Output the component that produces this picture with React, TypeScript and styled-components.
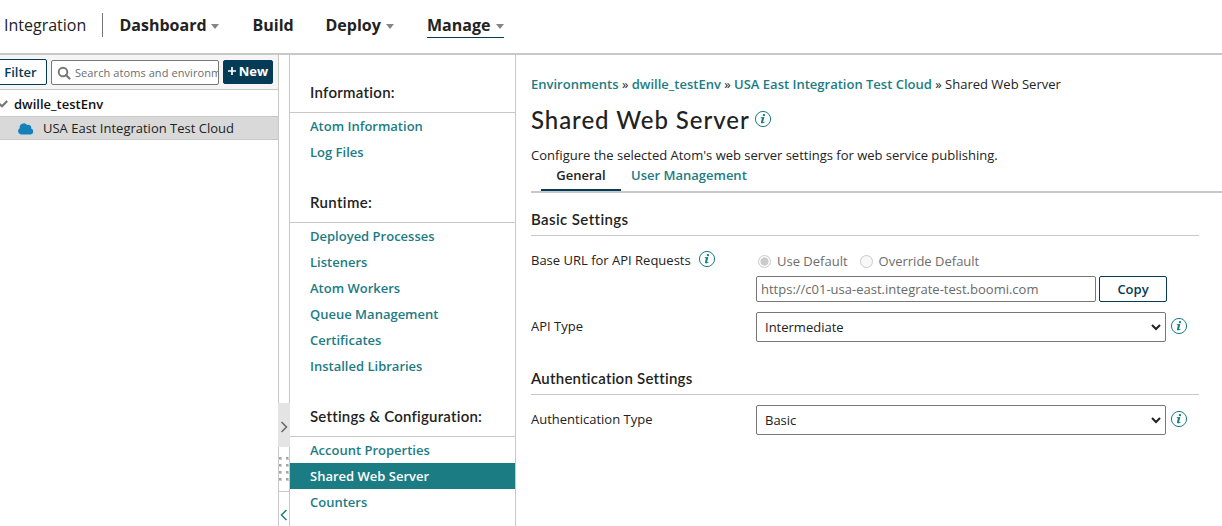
import React from "react";
import styled, { createGlobalStyle, css } from "styled-components";

const teal = "#1c7c84";
const navy = "#063b56";
const line = "#c8c8c8";

const GlobalStyle = createGlobalStyle`
  * { box-sizing: border-box; }
  html, body { margin: 0; overflow: hidden; background: #fff; }
  body, button, input {
    font-family: "Open Sans", "Noto Sans", sans-serif;
    font-size: 13px;
    color: #222;
  }
`;

const Page = styled.div`
  width: 1222px;
  height: 526px;
  display: flex;
  flex-direction: column;
  overflow: hidden;
  white-space: nowrap;
`;
const Header = styled.header`
  height: 55px;
  flex: none;
  display: flex;
  align-items: flex-start;
  padding: 13px 0 0 4px;
  border-bottom: 2px solid ${line};
`;
const Product = styled.span`
  width: 99px;
  height: 24px;
  border-right: 1px solid #777;
  font-size: 16px;
  line-height: 24px;
`;
const MenuItem = styled.a<{ $gap: number; $width: number; $active?: boolean }>`
  display: flex;
  align-items: center;
  justify-content: space-between;
  margin-left: ${(p) => p.$gap}px;
  width: ${(p) => p.$width}px;
  height: 25px;
  font-size: 16px;
  font-weight: 700;
  line-height: 24px;
  border-bottom: 1px solid ${(p) => (p.$active ? navy : "transparent")};
`;
const Caret = styled.i`
  border: 4px solid transparent;
  border-top: 5px solid #858585;
  border-bottom: 0;
  margin-top: 2px;
`;
const Body = styled.div`
  flex: 1;
  min-height: 0;
  display: flex;
`;

const Sidebar = styled.aside`
  width: 279px;
  flex: none;
  border-right: 1px solid ${line};
`;
const Toolbar = styled.div`
  height: 35px;
  display: flex;
  align-items: flex-start;
  padding-top: 4px;
  background: #f5f5f5;
  border-bottom: 1px solid ${line};
`;
const buttonBase = css`
  padding: 0;
  border: 1px solid ${navy};
  border-radius: 2px;
  font-weight: 600;
  color: ${navy};
  background: #fff;
`;
const FilterButton = styled.button`
  ${buttonBase}
  width: 52px;
  height: 26px;
  margin-left: -5px;
  padding-right: 1px;
  line-height: 24px;
`;
const SearchField = styled.label`
  display: flex;
  align-items: center;
  width: 168px;
  height: 25px;
  margin: 1px 4px 0;
  padding-left: 5px;
  border: 1px solid #777;
  border-radius: 2px;
  background: #fff;
  overflow: hidden;
`;
const SearchText = styled.span`
  flex: 1;
  min-width: 0;
  overflow: hidden;
  margin-left: 4px;
  font-size: 11px;
  letter-spacing: 0.08px;
  color: #6d6d6d;
`;
const NewButton = styled.button`
  ${buttonBase}
  display: flex;
  align-items: center;
  justify-content: center;
  gap: 3px;
  width: 50px;
  height: 24px;
  margin-top: 1px;
  color: #fff;
  font-weight: 700;
  line-height: 20px;
  padding-bottom: 2px;
  background: ${navy};
`;
const TreeRow = styled.div<{ $child?: boolean }>`
  display: flex;
  align-items: center;
  height: ${(p) => (p.$child ? 24 : 26)}px;
  padding-top: ${(p) => (p.$child ? 0 : 2)}px;
  ${(p) =>
    p.$child
      ? css`
          padding-left: 17px;
          background: #d9d9d9;
          border: solid ${line};
          border-width: 1px 0;
        `
      : css`
          font-weight: 600;
          color: #111;
        `}
  svg { flex: none; }
`;
const TreeLabel = styled.span<{ $gap: number }>`
  margin-left: ${(p) => p.$gap}px;
`;

const Splitter = styled.div`
  width: 11px;
  flex: none;
  display: flex;
  flex-direction: column;
  align-items: center;
  padding-top: 348px;
  border-right: 1px solid ${line};
`;
const Handle = styled.div`
  width: 12px;
  height: 44px;
  flex: none;
  display: flex;
  align-items: center;
  justify-content: center;
  padding-top: 3px;
  background: #e4e4e4;
`;
const Grip = styled.div`
  display: grid;
  grid-template-columns: 3px 3px;
  grid-auto-rows: 3px;
  gap: 4px;
  height: 45px;
  width: 11px;
  padding-top: 10px;
  border-bottom: 1px solid ${line};
`;
const Dot = styled.i`
  background: #a4a4a4;
  border: solid #d0d0d0;
  border-width: 0 1px 1px 0;
`;
const Collapse = styled.div`
  padding-top: 17px;
  line-height: 0;
`;

const Nav = styled.nav`
  width: 226px;
  flex: none;
  border-right: 1px solid ${line};
`;
const headingFont = css`
  font-family: Lato, sans-serif;
  font-weight: 600;
  color: #222;
`;
const NavHeading = styled.h3<{ $spacing: number }>`
  ${headingFont}
  height: 58px;
  margin: 0;
  padding: 27px 0 0 20px;
  font-size: 15px;
  line-height: 20px;
  letter-spacing: ${(p) => p.$spacing}px;
  border-bottom: 1px solid ${line};
`;
const NavLink = styled.a<{ $active?: boolean }>`
  display: block;
  height: 26px;
  padding-left: 20px;
  line-height: 26px;
  font-weight: 600;
  color: ${(p) => (p.$active ? "#fff" : teal)};
  background: ${(p) => (p.$active ? teal : "transparent")};
`;

const Main = styled.main`
  flex: 1;
  padding: 20px 0 0 15px;
`;
const Crumbs = styled.div`
  line-height: 18px;
`;
const Crumb = styled.a`
  font-weight: 600;
  color: ${teal};
`;
const Title = styled.h1`
  ${headingFont}
  display: flex;
  align-items: center;
  gap: 4px;
  height: 30px;
  margin: 11px 0 0;
  font-size: 24px;
  font-weight: 500;
`;
const TitleText = styled.span`
  letter-spacing: 0.95px;
`;
const Description = styled.p`
  margin: 12px 0 0;
  line-height: 18px;
`;
const Tabs = styled.div`
  display: flex;
  height: 29px;
  padding-left: 10px;
  border-bottom: 2px solid ${line};
`;
const Tab = styled.a<{ $active?: boolean }>`
  width: ${(p) => (p.$active ? 80 : 140)}px;
  height: 27px;
  padding-left: ${(p) => (p.$active ? 0 : 10)}px;
  text-align: ${(p) => (p.$active ? "center" : "left")};
  line-height: 22px;
  font-weight: 600;
  color: ${(p) => (p.$active ? "#222" : teal)};
  border-bottom: 2px solid ${(p) => (p.$active ? navy : "transparent")};
`;
const Section = styled.h2<{ $gap: number; $spacing: number }>`
  ${headingFont}
  width: 668px;
  height: 27px;
  margin: ${(p) => p.$gap}px 0 0;
  font-size: 15px;
  line-height: 20px;
  letter-spacing: ${(p) => p.$spacing}px;
  border-bottom: 1px solid ${line};
`;
const Row = styled.div<{ $top: number }>`
  display: flex;
  align-items: flex-start;
  padding-top: ${(p) => p.$top}px;
`;
const Label = styled.div<{ $top: number }>`
  display: flex;
  align-items: center;
  gap: 7px;
  width: 225px;
  height: 18px;
  margin-top: ${(p) => p.$top}px;
  svg { margin-bottom: 3px; }
`;
const Choices = styled.div`
  display: flex;
  align-items: center;
  height: 18px;
  margin-top: 1px;
  color: #6d6d6d;
`;
const Radio = styled.i<{ $on?: boolean }>`
  width: 13px;
  height: 13px;
  margin: 0 6px 0 ${(p) => (p.$on ? 2 : 12)}px;
  border: 1px solid #cbcbcb;
  border-radius: 50%;
  background: ${(p) => (p.$on ? "radial-gradient(circle, #cbcbcb 3.6px, #fafafa 4.4px)" : "#f8f8f8")};
`;
const UrlLine = styled.div`
  display: flex;
  gap: 3px;
  margin-top: 6px;
`;
const UrlField = styled.div`
  width: 340px;
  height: 26px;
  padding-left: 4px;
  line-height: 25px;
  border: 1px solid #777;
  border-radius: 2px;
  color: #6a6a6a;
`;
const CopyButton = styled.button`
  ${buttonBase}
  width: 68px;
  height: 26px;
`;
const SelectBox = styled.div`
  display: flex;
  align-items: center;
  justify-content: space-between;
  width: 410px;
  height: 30px;
  margin-right: 4px;
  padding: 0 4px 0 8px;
  border: 1px solid #777;
  border-radius: 2px;
`;
const InfoSlot = styled.span`
  padding-top: 5px;
  line-height: 0;
`;

const Info = () => (
  <svg width="18" height="18" viewBox="0 0 18 18" style={{ flex: "none" }}>
    <circle cx="9" cy="9" r="7.6" fill="none" stroke={teal} strokeWidth="1" />
    <circle cx="9.9" cy="5.1" r="1.2" fill={teal} />
    <path d="M6.7 7.3 10.4 7 9.1 12Q9.1 12.5 10.6 11.7V12.4Q6.9 14.3 6.9 12.4L7.9 8.2 6.7 8.1Z" fill={teal} />
  </svg>
);

const Select = ({ value }: { value: string }) => (
  <>
    <SelectBox>
      {value}
      <svg width="10" height="8" viewBox="0 0 10 8">
        <path d="M1 2 5 6 9 2" fill="none" stroke="#222" strokeWidth="2" />
      </svg>
    </SelectBox>
    <InfoSlot><Info /></InfoSlot>
  </>
);

const groups = [
  { title: "Information:", spacing: 0.28, items: ["Atom Information", "Log Files"] },
  {
    title: "Runtime:",
    spacing: 0.35,
    items: ["Deployed Processes", "Listeners", "Atom Workers", "Queue Management", "Certificates", "Installed Libraries"],
  },
  { title: "Settings & Configuration:", spacing: 0.22, items: ["Account Properties", "Shared Web Server", "Counters"] },
];

export default function App() {
  return (
    <Page>
      <GlobalStyle />
      <Header>
        <Product>Integration</Product>
        <MenuItem $gap={16.5} $width={99}>Dashboard<Caret /></MenuItem>
        <MenuItem $gap={34} $width={41}>Build</MenuItem>
        <MenuItem $gap={32} $width={68.5}>Deploy<Caret /></MenuItem>
        <MenuItem $gap={33} $width={77} $active>Manage<Caret /></MenuItem>
      </Header>
      <Body>
        <Sidebar>
          <Toolbar>
            <FilterButton>Filter</FilterButton>
            <SearchField>
              <svg width="14" height="14" viewBox="0 0 14 14" style={{ flex: "none" }}>
                <circle cx="6" cy="6" r="4.3" fill="none" stroke="#777" strokeWidth="1.9" />
                <path d="m9 9 3.5 3.5" stroke="#777" strokeWidth="2.2" strokeLinecap="round" />
              </svg>
              <SearchText>Search atoms and environments</SearchText>
            </SearchField>
            <NewButton>
              <svg width="8" height="8" viewBox="0 0 8 8"><path d="M4 0V8M0 4H8" stroke="#fff" strokeWidth="1.7" /></svg>
              New
            </NewButton>
          </Toolbar>
          <TreeRow>
            <svg width="8" height="8" viewBox="0 0 8 8"><path d="M-1 3.5 2 6.3 7.2 1" fill="none" stroke="#777" strokeWidth="2.2" /></svg>
            <TreeLabel $gap={6}>dwille_testEnv</TreeLabel>
          </TreeRow>
          <TreeRow $child>
            <svg width="17" height="13" viewBox="0 0 17 13">
              <path d="M4 12.5A3.4 3.4 0 0 1 2.7 6.2 4.2 4.2 0 0 1 10.2 3 2.9 2.9 0 0 1 14.2 6.5 3.1 3.1 0 0 1 13.6 12.5Z" fill="#1481ba" />
            </svg>
            <TreeLabel $gap={9}>USA East Integration Test Cloud</TreeLabel>
          </TreeRow>
        </Sidebar>
        <Splitter>
          <Handle>
            <svg width="8" height="12" viewBox="0 0 8 12"><path d="m1.5 1 5 5-5 5" fill="none" stroke="#666" strokeWidth="1.5" /></svg>
          </Handle>
          <Grip>{Array.from({ length: 8 }, (_, i) => <Dot key={i} />)}</Grip>
          <Collapse>
            <svg width="8" height="12" viewBox="0 0 8 12"><path d="m6.5 1-5 5 5 5" fill="none" stroke={teal} strokeWidth="1.5" /></svg>
          </Collapse>
        </Splitter>
        <Nav>
          {groups.map((g) => (
            <React.Fragment key={g.title}>
              <NavHeading $spacing={g.spacing}>{g.title}</NavHeading>
              {g.items.map((item) => (
                <NavLink key={item} $active={item === "Shared Web Server"}>{item}</NavLink>
              ))}
            </React.Fragment>
          ))}
        </Nav>
        <Main>
          <Crumbs>
            <Crumb>Environments</Crumb> » <Crumb>dwille_testEnv</Crumb> » <Crumb>USA East Integration Test Cloud</Crumb> » Shared Web Server
          </Crumbs>
          <Title><TitleText>Shared Web Server</TitleText><Info /></Title>
          <Description>Configure the selected Atom's web server settings for web service publishing.</Description>
          <Tabs>
            <Tab $active>General</Tab>
            <Tab>User Management</Tab>
          </Tabs>
          <Section $gap={16} $spacing={0.4}>Basic Settings</Section>
          <Row $top={15}>
            <Label $top={0}>Base URL for API Requests<Info /></Label>
            <div>
              <Choices>
                <Radio $on />Use Default<Radio />Override Default
              </Choices>
              <UrlLine>
                <UrlField>https://c01-usa-east.integrate-test.boomi.com</UrlField>
                <CopyButton>Copy</CopyButton>
              </UrlLine>
            </div>
          </Row>
          <Row $top={10}>
            <Label $top={5}>API Type</Label>
            <Select value="Intermediate" />
          </Row>
          <Section $gap={26} $spacing={0.24}>Authentication Settings</Section>
          <Row $top={10}>
            <Label $top={5}>Authentication Type</Label>
            <Select value="Basic" />
          </Row>
        </Main>
      </Body>
    </Page>
  );
}
